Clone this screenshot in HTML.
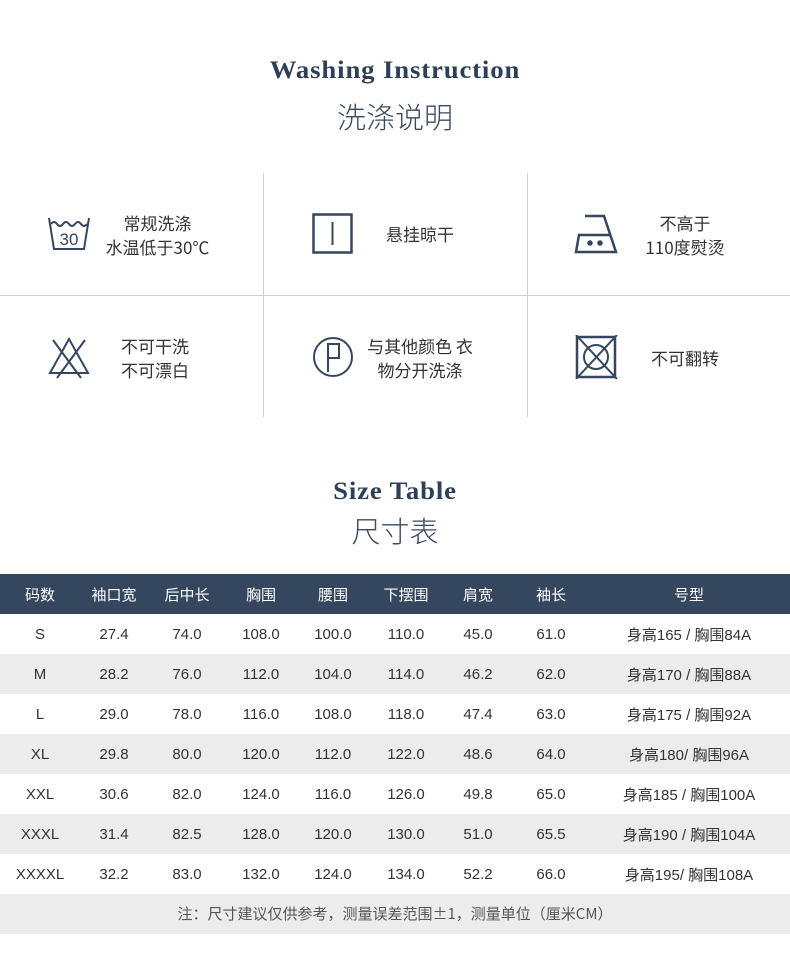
<!DOCTYPE html>
<html><head><meta charset="utf-8"><style>
*{margin:0;padding:0;box-sizing:border-box}
body{width:790px;height:956px;background:#fff;position:relative;font-family:"Liberation Sans","Noto Sans CJK SC",sans-serif;color:#333;overflow:hidden}
.t{position:absolute;left:0;width:790px;text-align:center}
.en{font-family:"Liberation Serif","Noto Serif CJK SC",serif;font-weight:bold;color:#2e3f58;font-size:25px;letter-spacing:0.8px;transform:scaleX(1.07)}
.cn{font-family:"Noto Sans CJK SC",sans-serif;font-weight:300;color:#3a4a60;font-size:29px}
.vl{position:absolute;top:173px;height:244px;width:1px;background:#cfcfcf}
.hl{position:absolute;top:295px;left:0;width:790px;height:1px;background:#cfcfcf}
.cell{position:absolute;font-size:17px;color:#333;line-height:24px;text-align:center;font-family:"Noto Sans CJK SC",sans-serif}
svg{position:absolute}
table{position:absolute;top:574px;left:0;width:790px;border-collapse:collapse;font-size:15px}
td{height:40px;text-align:center;padding:0;color:#333}
tr.h td{background:#34475f;color:#fff;font-family:"Noto Sans CJK SC",sans-serif;font-size:15px}
tr.g td{background:#ececec}
.note{position:absolute;top:894px;left:0;width:790px;height:40px;background:#ececec;text-align:center;line-height:40px;font-size:15px;color:#555;font-family:"Noto Sans CJK SC",sans-serif}
</style></head><body>
<div class="t en" style="top:57px">Washing Instruction</div>
<div class="t cn" style="top:95px">洗涤说明</div>

<div class="vl" style="left:263px"></div>
<div class="vl" style="left:527px"></div>
<div class="hl"></div>

<svg style="left:47px;top:215px" width="44" height="38" viewBox="0 0 44 38" fill="none" stroke="#34475f" stroke-width="2">
<path d="M2 3 L7 34 H37 L42 3"/><path d="M4 9 q3 -4 6 0 q3 4 6 0 q3 -4 6 0 q3 4 6 0 q3 -4 6 0 q3 4 6 0"/>
<text x="22" y="30" font-size="17" fill="#34475f" stroke="none" text-anchor="middle" font-family="Liberation Sans Narrow,Liberation Sans">30</text></svg>
<div class="cell" style="left:100px;top:211px;width:115px">常规洗涤<br>水温低于30℃</div>

<svg style="left:312px;top:213px" width="42" height="42"><rect x="1.5" y="1.5" width="38" height="38" fill="#fff" stroke="#34475f" stroke-width="2.5"/><line x1="20.5" y1="9" x2="20.5" y2="32" stroke="#34475f" stroke-width="2"/></svg>
<div class="cell" style="left:375px;top:222px;width:90px">悬挂晾干</div>

<svg style="left:574px;top:213px" width="46" height="42" fill="none" stroke="#34475f" stroke-width="2.5"><path d="M11 3 H30 L42 39 H2 L5 22 H37"/><circle cx="16" cy="30" r="1.5" fill="#34475f"/><circle cx="26" cy="30" r="1.5" fill="#34475f"/></svg>
<div class="cell" style="left:630px;top:211px;width:110px">不高于<br>110度熨烫</div>

<svg style="left:47px;top:336px" width="44" height="44" fill="none" stroke="#34475f" stroke-width="2"><path d="M22 3 L41 37 H3 Z"/><path d="M6 4 L34 42 M38 4 L10 42"/></svg>
<div class="cell" style="left:110px;top:334px;width:90px">不可干洗<br>不可漂白</div>

<svg style="left:312px;top:336px" width="42" height="42" fill="none" stroke="#34475f" stroke-width="2"><circle cx="21" cy="21" r="19"/><path d="M16 36 V8 H27 V22 H16"/></svg>
<div class="cell" style="left:360px;top:334px;width:120px">与其他颜色 衣<br>物分开洗涤</div>

<svg style="left:575px;top:335px" width="44" height="44" fill="none" stroke="#34475f" stroke-width="2.5"><rect x="2" y="2" width="38" height="40"/><circle cx="21" cy="22" r="12" stroke-width="2"/><path d="M1 0 L42 44 M42 0 L1 44" stroke-width="2"/></svg>
<div class="cell" style="left:640px;top:346px;width:90px">不可翻转</div>

<div class="t en" style="top:478px">Size Table</div>
<div class="t cn" style="top:509px">尺寸表</div>

<table>
<colgroup><col style="width:80px"><col style="width:68px"><col style="width:78px"><col style="width:70px"><col style="width:74px"><col style="width:72px"><col style="width:72px"><col style="width:74px"><col></colgroup>
<tr class="h"><td>码数</td><td>袖口宽</td><td>后中长</td><td>胸围</td><td>腰围</td><td>下摆围</td><td>肩宽</td><td>袖长</td><td>号型</td></tr>
<tr><td>S</td><td>27.4</td><td>74.0</td><td>108.0</td><td>100.0</td><td>110.0</td><td>45.0</td><td>61.0</td><td>身高165 / 胸围84A</td></tr>
<tr class="g"><td>M</td><td>28.2</td><td>76.0</td><td>112.0</td><td>104.0</td><td>114.0</td><td>46.2</td><td>62.0</td><td>身高170 / 胸围88A</td></tr>
<tr><td>L</td><td>29.0</td><td>78.0</td><td>116.0</td><td>108.0</td><td>118.0</td><td>47.4</td><td>63.0</td><td>身高175 / 胸围92A</td></tr>
<tr class="g"><td>XL</td><td>29.8</td><td>80.0</td><td>120.0</td><td>112.0</td><td>122.0</td><td>48.6</td><td>64.0</td><td>身高180/ 胸围96A</td></tr>
<tr><td>XXL</td><td>30.6</td><td>82.0</td><td>124.0</td><td>116.0</td><td>126.0</td><td>49.8</td><td>65.0</td><td>身高185 / 胸围100A</td></tr>
<tr class="g"><td>XXXL</td><td>31.4</td><td>82.5</td><td>128.0</td><td>120.0</td><td>130.0</td><td>51.0</td><td>65.5</td><td>身高190 / 胸围104A</td></tr>
<tr><td>XXXXL</td><td>32.2</td><td>83.0</td><td>132.0</td><td>124.0</td><td>134.0</td><td>52.2</td><td>66.0</td><td>身高195/ 胸围108A</td></tr>
</table>
<div class="note">注：尺寸建议仅供参考，测量误差范围±1，测量单位（厘米CM）</div>
</body></html>
